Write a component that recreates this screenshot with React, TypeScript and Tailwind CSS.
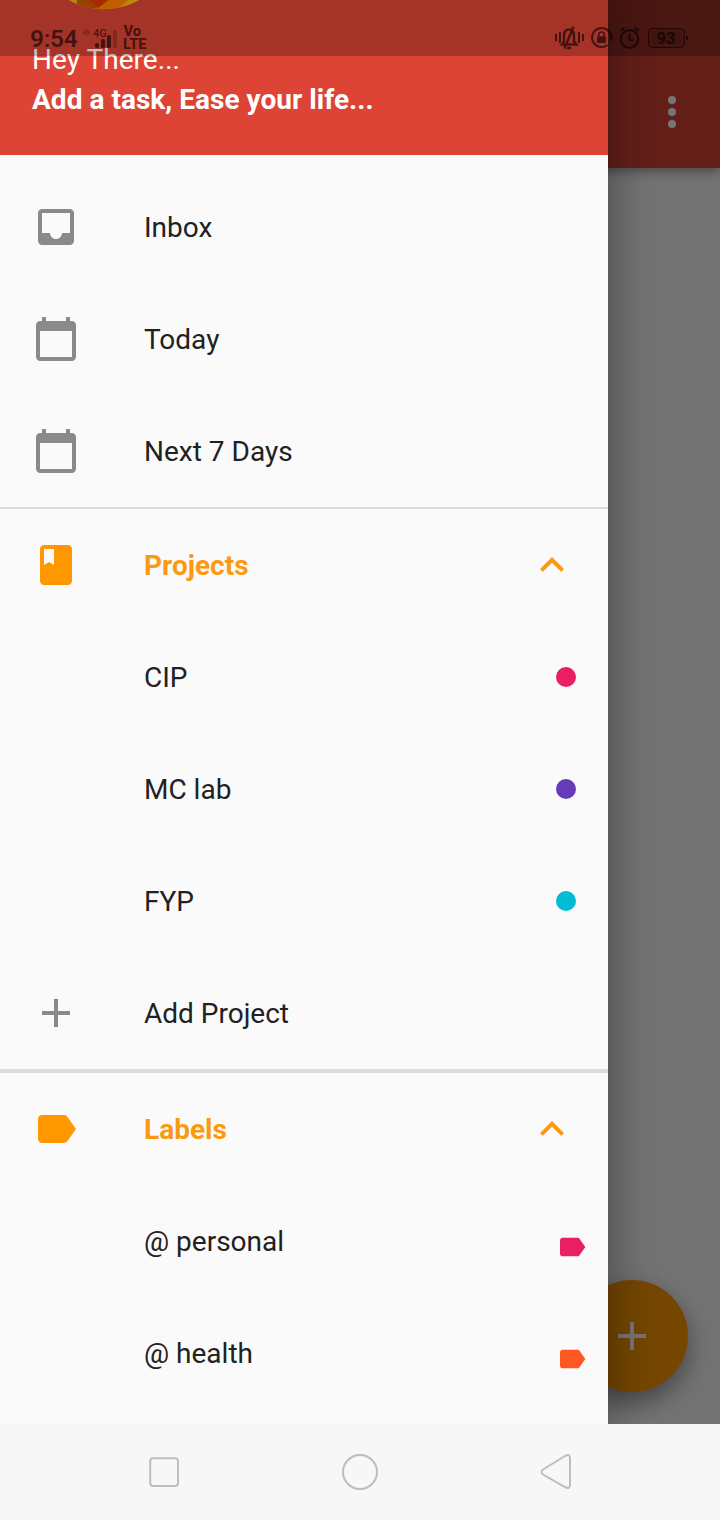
import type { ReactNode } from 'react';

const INBOX = 'M19 3H4.99c-1.11 0-1.98.9-1.98 2L3 19c0 1.1.88 2 1.99 2H19c1.1 0 2-.9 2-2V5c0-1.1-.9-2-2-2zm0 12h-4c0 1.66-1.35 3-3 3s-3-1.34-3-3H4.99V5H19v10z';
const CALENDAR = 'M20 3h-1V1h-2v2H7V1H5v2H4c-1.1 0-2 .9-2 2v16c0 1.1.9 2 2 2h16c1.1 0 2-.9 2-2V5c0-1.1-.9-2-2-2zm0 18H4V8h16v13z';
const BOOK = 'M18 2H6c-1.1 0-2 .9-2 2v16c0 1.1.9 2 2 2h12c1.1 0 2-.9 2-2V4c0-1.1-.9-2-2-2zM6 4h5v8l-2.500-1.500L6 12V4z';
const PLUS = 'M19 13h-6v6h-2v-6H5v-2h6V5h2v6h6v2z';
const LABEL = 'M17.63 5.84C17.27 5.33 16.67 5 16 5L5 5.01C3.9 5.01 3 5.9 3 7v10c0 1.1.9 1.99 2 1.99L16 19c.67 0 1.27-.33 1.63-.84L22 12l-4.37-6.16z';
const EXPAND_LESS = 'M12 8l-6 6 1.41 1.41L12 10.83l4.59 4.58L18 14z';

function Icon({ d, className }: { d: string; className: string }) {
  return (
    <svg viewBox="0 0 24 24" fill="currentColor" className={'shrink-0 ' + className}>
      <path d={d} />
    </svg>
  );
}

type RowProps = { icon?: string; label: string; accent?: boolean; trailing?: ReactNode };

function Row({ icon, label, accent, trailing }: RowProps) {
  return (
    <div className="flex h-28 shrink-0 items-center px-8">
      <div className="w-28 shrink-0">
        {icon && <Icon d={icon} className={accent ? 'size-12 text-[#ff9800]' : 'size-12 text-[#8a8a8a]'} />}
      </div>
      <span className={accent ? 'flex-1 pt-0.5 font-bold text-[#fb9a12]' : 'flex-1 pt-0.5 text-[#212121]'}>{label}</span>
      {trailing}
    </div>
  );
}

const chevron = <Icon d={EXPAND_LESS} className="size-12 text-[#fb9a12]" />;

function StatusBar() {
  return (
    <div className="absolute inset-x-0 top-0 h-14 bg-black/25">
      <div className="flex h-full items-start justify-between pr-[31px] pl-[30px] text-black/60">
        <div className="flex">
          <span className="w-[52px] pt-[24px] text-[24.500px] leading-[30px] font-semibold tracking-[-0.3px]">9:54</span>
          <svg width="66" height="34" viewBox="82 20 66 34" className="mt-5" fill="currentColor" fontFamily="Roboto">
            <path d="M86 28.500v8l-3.500-4zM87 28.500l3.500 4-3.500 4z" opacity=".35" />
            <text x="93" y="37" fontSize="11" fontWeight="500">4G</text>
            <rect x="95" y="43" width="4" height="5" rx="2" />
            <rect x="101" y="39" width="4" height="9" rx="1.500" />
            <rect x="107" y="35" width="4" height="13" rx="1.500" />
            <rect x="113" y="30" width="4" height="18" rx="1.500" opacity=".35" />
            <text x="123.500" y="36.300" fontSize="14" fontWeight="800" textLength="17.500" lengthAdjust="spacingAndGlyphs">Vo</text>
            <text x="123" y="49" fontSize="14.500" fontWeight="800" textLength="23.500" lengthAdjust="spacingAndGlyphs">LTE</text>
          </svg>
        </div>
        <svg width="136" height="34" viewBox="553 20 136 34" className="mt-5" fill="none" stroke="currentColor" strokeWidth="2">
          <path d="M556 34v7M560 32v11M579 32v11M583 34v7" />
          <path d="M562 44.500h14.500l-2.500-3v-5.500c0-4-2-6.500-5-6.500s-5 2.500-5 6.500v5.500zM564.500 48.500L573.500 26.500M567 48h4" strokeWidth="2.400" />
          <path d="M611 36.500A9.500 9.500 0 1 0 607.500 45M611 34v7" />
          <rect x="597" y="36.300" width="9" height="6.700" rx="1" fill="currentColor" stroke="none" />
          <path d="M598.700 36.300v-1.500a2.800 2.800 0 0 1 5.600 0v1.500" strokeWidth="1.600" />
          <circle cx="629.500" cy="39" r="8.800" strokeWidth="2.200" />
          <path d="M629.500 34v6h4M620.500 31l4-3.500M638.500 31l-4-3.500" strokeWidth="2.200" />
          <rect x="648.700" y="28.700" width="35.600" height="18.600" rx="4" strokeWidth="1.300" />
          <rect x="651" y="31" width="31" height="14" rx="2" fill="currentColor" fillOpacity=".2" stroke="none" />
          <path d="M687 36v4" />
          <text x="666" y="44" fontSize="16.500" fontWeight="800" textAnchor="middle" fontFamily="Roboto" fill="currentColor" stroke="none">93</text>
        </svg>
      </div>
    </div>
  );
}

function Drawer() {
  return (
    <aside className="absolute top-0 left-0 flex h-[1424px] w-[608px] flex-col overflow-hidden bg-[#fafafa] text-[28px] leading-10 shadow-[0_0_40px_4px_rgba(0,0,0,0.35)]">
      <header className="flex h-[155px] shrink-0 flex-col justify-between bg-[#de4435] pb-[35px] pl-8 text-white">
        <svg width="144" height="10" viewBox="0 134 144 10" className="shrink-0">
          <clipPath id="avatar"><circle cx="72" cy="71.200" r="72" /></clipPath>
          <g clipPath="url(#avatar)">
            <path fill="#f5bd0a" d="M0 130h144v14H0z" />
            <path fill="#c95a00" d="M44 130h22v14H46z" />
            <path fill="#ff7f00" d="M76 133h22l-14 11H56l10-3z" />
            <path fill="#dc3a04" d="M56 133h22l-12 9z" />
          </g>
        </svg>
        <div>
          <div className="tracking-[0.04px]">Hey There...</div>
          <div className="font-bold tracking-[0.03px]">Add a task, Ease your life...</div>
        </div>
      </header>
      <nav className="flex flex-col pt-4">
        <Row icon={INBOX} label="Inbox" />
        <Row icon={CALENDAR} label="Today" />
        <Row icon={CALENDAR} label="Next 7 Days" />
        <div className="h-0.5 shrink-0 bg-[#dbdbdb]" />
        <Row icon={BOOK} label="Projects" accent trailing={chevron} />
        <Row label="CIP" trailing={<span className="size-5 rounded-full bg-[#e91e63]" />} />
        <Row label="MC lab" trailing={<span className="size-5 rounded-full bg-[#673ab7]" />} />
        <Row label="FYP" trailing={<span className="size-5 rounded-full bg-[#00bcd4]" />} />
        <Row icon={PLUS} label="Add Project" />
        <div className="h-1 shrink-0 bg-[#dbdbdb]" />
        <Row icon={LABEL} label="Labels" accent trailing={chevron} />
        <Row label="@ personal" trailing={<Icon d={LABEL} className="mt-3 -mr-3 size-8 text-[#e91e63]" />} />
        <Row label="@ health" trailing={<Icon d={LABEL} className="mt-3 -mr-3 size-8 text-[#ff5722]" />} />
      </nav>
    </aside>
  );
}

export default function App() {
  return (
    <div className="relative flex h-[1520px] w-[720px] flex-col overflow-hidden bg-[#fafafa] font-['Roboto',sans-serif]">
      <div className="relative flex flex-1 flex-col">
        <div className="flex h-[168px] items-end justify-end bg-[#db4437] pr-[42px] pb-10 shadow-[0_4px_10px_rgba(0,0,0,0.35)]">
          <div className="flex flex-col gap-1 pr-[2px]">
            <span className="size-2 rounded-full bg-white" />
            <span className="size-2 rounded-full bg-white" />
            <span className="size-2 rounded-full bg-white" />
          </div>
        </div>
        <button className="absolute right-8 bottom-8 flex size-28 items-center justify-center rounded-full bg-[#ff9800] shadow-[0_10px_24px_rgba(0,0,0,0.4)]">
          <Icon d={PLUS} className="size-12 text-white" />
        </button>
        <div className="absolute inset-0 bg-black/54" />
      </div>
      <Drawer />
      <StatusBar />
      <div className="relative flex h-24 items-center justify-center bg-[#f7f7f7]">
        <svg width="424" height="40" viewBox="148 1452 424 40" fill="none" stroke="#bdbdbd" strokeWidth="2">
          <rect x="150.200" y="1458.200" width="27.800" height="27.800" rx="3" />
          <circle cx="360" cy="1472" r="17" />
          <path d="M543 1469.500L565 1456q5-2.500 5 2v27q0 4.500-5 2L543 1474.500q-3-2.500 0-5z" />
        </svg>
      </div>
    </div>
  );
}
